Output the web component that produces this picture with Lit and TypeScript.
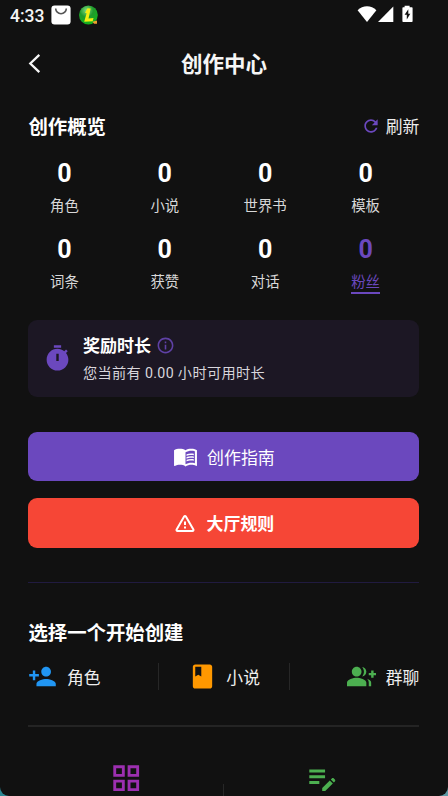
import { LitElement, html, css, svg } from "lit";
import { customElement, property } from "lit/decorators.js";
import { classMap } from "lit/directives/class-map.js";

const ICONS: Record<string, string> = {
  refresh:
    "M17.65 6.35C16.2 4.9 14.21 4 12 4c-4.42 0-7.99 3.58-7.99 8s3.57 8 7.99 8c3.73 0 6.84-2.55 7.73-6h-2.08c-.82 2.33-3.04 4-5.65 4-3.31 0-6-2.69-6-6s2.69-6 6-6c1.66 0 3.14.69 4.22 1.78L13 11h7V4l-2.35 2.35z",
  timer:
    "M9 1h6v2H9zM19.03 7.39l1.42-1.42c-.43-.51-.9-.99-1.41-1.41l-1.42 1.42C16.07 4.74 14.12 4 12 4c-4.97 0-9 4.03-9 9s4.02 9 9 9 9-4.03 9-9c0-2.12-.74-4.07-1.97-5.61zM13 14h-2V8h2v6z",
  info:
    "M11 7h2v2h-2zm0 4h2v6h-2zm1-9C6.48 2 2 6.48 2 12s4.48 10 10 10 10-4.48 10-10S17.52 2 12 2zm0 18c-4.41 0-8-3.59-8-8s3.59-8 8-8 8 3.59 8 8-3.59 8-8 8z",
  book:
    "M21 5c-1.11-.35-2.33-.5-3.5-.5-1.95 0-4.05.4-5.5 1.5-1.45-1.1-3.55-1.5-5.5-1.5S2.45 4.9 1 6v14.65c0 .25.25.5.5.5.1 0 .15-.05.25-.05C3.1 20.45 5.05 20 6.5 20c1.95 0 4.05.4 5.5 1.5 1.35-.85 3.8-1.5 5.5-1.5 1.65 0 3.35.3 4.75 1.05.1.05.15.05.25.05.25 0 .5-.25.5-.5V6c-.6-.45-1.25-.75-2-1zm0 13.5c-1.1-.35-2.3-.5-3.5-.5-1.7 0-4.15.65-5.5 1.5V8c1.35-.85 3.8-1.5 5.5-1.5 1.2 0 2.4.15 3.5.5v11.5zM17.5 10.5c.88 0 1.73.09 2.5.26V9.24c-.79-.15-1.64-.24-2.5-.24-1.7 0-3.24.29-4.5.83v1.66c1.13-.64 2.7-.99 4.5-.99zM13 12.49v1.66c1.13-.64 2.7-.99 4.5-.99.88 0 1.73.09 2.5.26V11.9c-.79-.15-1.64-.24-2.5-.24-1.7 0-3.24.3-4.5.83zm4.5 1.84c-1.7 0-3.24.29-4.5.83v1.66c1.13-.64 2.7-.99 4.5-.99.88 0 1.73.09 2.5.26v-1.52c-.79-.16-1.64-.24-2.5-.24z",
  warning:
    "M12 5.99L19.53 19H4.47L12 5.99M2.74 18c-.77 1.33.19 3 1.73 3h15.06c1.54 0 2.5-1.67 1.73-3L13.73 4.99c-.77-1.33-2.69-1.33-3.46 0L2.74 18zM11 10.5v3.5h2v-3.5zm0 5h2v2h-2z",
  person:
    "M15 12c2.21 0 4-1.79 4-4s-1.79-4-4-4-4 1.79-4 4 1.79 4 4 4zm-9-2V7H4v3H1v2h3v3h2v-3h3v-2H6zm9 4c-2.67 0-8 1.34-8 4v2h16v-2c0-2.66-5.33-4-8-4z",
  novel:
    "M18 2H6c-1.1 0-2 .9-2 2v16c0 1.1.9 2 2 2h12c1.1 0 2-.9 2-2V4c0-1.1-.9-2-2-2zM6 4h5v8l-2.5-1.5L6 12V4z",
  group:
    "M22 9V7h-2v2h-2v2h2v2h2v-2h2V9zM8 12c2.21 0 4-1.79 4-4s-1.79-4-4-4-4 1.79-4 4 1.79 4 4 4zm0 1c-2.67 0-8 1.34-8 4v3h16v-3c0-2.66-5.33-4-8-4zM12.51 4.05C13.43 5.11 14 6.49 14 8s-.57 2.89-1.49 3.95C14.47 11.7 16 10.04 16 8s-1.53-3.7-3.49-3.95zM16.53 13.83C17.42 14.66 18 15.7 18 17v3h2v-3c0-1.45-1.59-2.51-3.47-3.17z",
  grid:
    "M3 3v8h8V3H3zm6 6H5V5h4v4zm-6 4v8h8v-8H3zm6 6H5v-4h4v4zm4-16v8h8V3h-8zm6 6h-4V5h4v4zm-6 4v8h8v-8h-8zm6 6h-4v-4h4v4z",
  note:
    "M3 10h11v2H3v-2zm0-2h11V6H3v2zm0 8h7v-2H3v2zm15.01-3.13.71-.71c.39-.39 1.02-.39 1.41 0l.71.71c.39.39.39 1.02 0 1.41l-.71.71-2.12-2.12zm-.71.71-5.3 5.3V21h2.12l5.3-5.3-2.12-2.12z",
};

@customElement("md-icon")
class MdIcon extends LitElement {
  @property() name = "";
  static styles = css`
    :host {
      display: block;
      flex: none;
      width: 29px;
      height: 29px;
    }
    .glyph {
      display: block;
      width: 100%;
      height: 100%;
      fill: currentColor;
    }
  `;
  render() {
    return html`<svg class="glyph" viewBox="0 0 24 24">
      ${svg`<path fill-rule=${this.name === "warning" ? "evenodd" : "nonzero"} d=${ICONS[this.name]}></path>`}
    </svg>`;
  }
}

const STATS = [
  { label: "角色", value: 0 },
  { label: "小说", value: 0 },
  { label: "世界书", value: 0 },
  { label: "模板", value: 0 },
  { label: "词条", value: 0 },
  { label: "获赞", value: 0 },
  { label: "对话", value: 0 },
  { label: "粉丝", value: 0, link: true },
];

@customElement("app-root")
class AppRoot extends LitElement {
  static styles = css`
    :host {
      display: block;
      height: 796px;
      overflow: hidden;
      background: linear-gradient(90deg, #2b8793, #5f9aa5);
      font-family: Roboto, "Noto Sans CJK SC", sans-serif;
      color: #fff;
    }
    .screen {
      box-sizing: border-box;
      height: 796px;
      overflow: hidden;
      background: #111;
      border-radius: 0 0 9px 9px;
      display: flex;
      flex-direction: column;
    }
    .status {
      flex: none;
      height: 31px;
      box-sizing: border-box;
      padding: 0 34px 0 10px;
      display: flex;
      align-items: center;
    }
    .time {
      font-size: 17.5px;
      line-height: 31px;
      font-weight: 500;
      width: 41px;
      padding-top: 1px;
      color: #f4f4f4;
    }
    .bag {
      width: 20px;
      height: 20px;
      margin-bottom: 1px;
    }
    .ball {
      width: 20px;
      height: 20px;
      margin: 0 0 1px 7px;
    }
    .signals {
      margin-left: auto;
      width: 57px;
      height: 18px;
      margin-bottom: 3px;
      margin-right: 1px;
    }
    .header {
      flex: none;
      height: 66px;
      display: grid;
      grid-template-columns: 56px 1fr 56px;
      align-items: center;
    }
    .back {
      width: 14px;
      height: 21px;
      margin: -2px 0 0 27px;
    }
    .title {
      text-align: center;
      font-size: 21.5px;
      line-height: 30px;
      padding-top: 2px;
      font-weight: 700;
      color: #f6f6f6;
    }
    .body {
      width: 391px;
      margin-left: 28.4px;
      display: flex;
      flex-direction: column;
    }
    .row {
      display: flex;
      align-items: center;
    }
    .section {
      height: 30px;
      margin-top: 14px;
      justify-content: space-between;
    }
    .h2 {
      font-size: 19.4px;
      line-height: 30px;
      font-weight: 700;
    }
    .section .h2 {
      padding-top: 3px;
    }
    .refresh {
      gap: 5px;
      font-size: 16.8px;
      color: #eee;
    }
    .refresh md-icon {
      width: 20px;
      height: 20px;
      color: #6b48be;
    }
    .stats {
      display: grid;
      grid-template-columns: repeat(4, 72px);
      grid-auto-rows: 75.5px;
      column-gap: 28.4px;
      margin-top: 18px;
      height: 160.5px;
    }
    .stat {
      display: flex;
      flex-direction: column;
      align-items: center;
    }
    .num {
      font-size: 25px;
      line-height: 30px;
      font-weight: 700;
    }
    .lab {
      font-size: 14.4px;
      line-height: 19px;
      margin-top: 8px;
      padding-bottom: 0.5px;
      color: #d8d8d8;
      border-bottom: 2px solid transparent;
    }
    .link .num,
    .link .lab {
      color: #6b48be;
    }
    .link .lab {
      border-color: #6b48be;
    }
    .card {
      height: 77.5px;
      box-sizing: border-box;
      border-radius: 9px;
      background: #1c1724;
      padding-left: 15px;
      gap: 10.5px;
    }
    .card md-icon {
      color: #6b48be;
    }
    .words {
      padding-top: 4px;
    }
    .reward {
      gap: 5px;
      font-size: 17px;
      line-height: 26px;
      font-weight: 700;
    }
    .reward md-icon {
      width: 19px;
      height: 19px;
      margin-bottom: 2px;
      color: #5f41a6;
    }
    .hint {
      font-size: 14.2px;
      line-height: 28px;
      letter-spacing: 0.35px;
      color: #d8d6dc;
      white-space: pre;
    }
    .btn {
      height: 49.5px;
      border-radius: 9px;
      justify-content: center;
      gap: 9px;
      font-size: 16.9px;
      margin-top: 17px;
    }
    .btn md-icon {
      width: 25px;
      height: 25px;
    }
    .guide {
      margin-top: 34.5px;
      background: #6b48be;
    }
    .rules {
      background: #f64636;
      font-weight: 700;
    }
    .rules md-icon {
      width: 24px;
      height: 24px;
      margin-left: -1px;
      margin-right: 1px;
    }
    .hr {
      height: 1.5px;
      background: #242424;
    }
    .violet {
      margin-top: 34px;
      background: #211b40;
    }
    .pick {
      margin-top: 36px;
    }
    .types {
      display: grid;
      grid-template-columns: 1fr 1px 1fr 1px 1fr;
      align-items: center;
      height: 30px;
      margin-top: 12.5px;
      margin-bottom: 33.5px;
    }
    .type {
      gap: 9.5px;
      font-size: 16.8px;
      color: #eee;
    }
    .blue {
      color: #2196f3;
    }
    .orange {
      color: #ff9800;
    }
    .green {
      color: #4caf50;
    }
    .purple {
      color: #9c2fb0;
    }
    .bar {
      width: 1px;
      height: 27px;
      background: #272727;
    }
    .mid {
      justify-content: center;
    }
    .last {
      justify-content: flex-end;
    }
    .more {
      display: grid;
      grid-template-columns: 1fr 1px 1fr;
      justify-items: center;
      margin-top: 34px;
    }
    .more md-icon {
      width: 34.4px;
      height: 34.4px;
    }
    .sep {
      width: 1px;
      height: 30px;
      margin-top: 23px;
      background: #272727;
    }
  `;

  render() {
    return html`<div class="screen">
      <div class="status">
        <span class="time">4:33</span>
        <svg class="bag" viewBox="0 0 20 20">
          <rect x="0.4" y="0.4" width="19.2" height="19" rx="3.2" fill="#fff"></rect>
          <path d="M4.7 3.4a5.3 5.3 0 0 0 10.6 0" fill="none" stroke="#555" stroke-width="1.6"></path>
        </svg>
        <svg class="ball" viewBox="0 0 20 20">
          <defs>
            <radialGradient id="g" cx="0.4" cy="0.25" r="0.8">
              <stop offset="0" stop-color="#7fdc83"></stop>
              <stop offset="0.45" stop-color="#1f9a2c"></stop>
              <stop offset="1" stop-color="#12b51c"></stop>
            </radialGradient>
          </defs>
          <circle cx="10.4" cy="10" r="9.4" fill="url(#g)"></circle>
          <path d="M9.5 3.2l3.2.3-2.2 10 5-.6-.8 3.3-8.5.6 2.4-8.6-1.6-.5z" fill="#f2ee12"></path>
          <path d="M14.5 16.7l4.5-1.2v3.3h-3z" fill="#f0a02c"></path>
        </svg>
        <svg class="signals" viewBox="0 0 57 18">
          <path d="M1.6 5.3C6.6-.2 15.4-.2 20.4 5.3L11 17z" fill="#fff"></path>
          <path d="M37.3 1.5V17H22z" fill="#fff"></path>
          <path
            d="M48.6.8h5v1.5h2.2q.8 0 .8.8V16.2q0 .8-.8.8h-8.6q-.8 0-.8-.8V3.1q0-.8.8-.8h1.4z"
            fill="#fff"
          ></path>
          <path d="M52.3 4.2l-3.7 5.6h2.2v4.6l3.5-5.7h-2z" fill="#111"></path>
        </svg>
      </div>
      <div class="header">
        <svg class="back" viewBox="0 0 14 21">
          <path d="M12.3 1.8L3.3 10.5l9 8.7" fill="none" stroke="#f6f6f6" stroke-width="2.3"></path>
        </svg>
        <div class="title">创作中心</div>
      </div>
      <div class="body">
        <div class="row section">
          <div class="h2">创作概览</div>
          <div class="row refresh"><md-icon name="refresh"></md-icon><span>刷新</span></div>
        </div>
        <div class="stats">
          ${STATS.map(
            (s) => html`<div class=${classMap({ stat: true, link: !!s.link })}>
              <span class="num">${s.value}</span><span class="lab">${s.label}</span>
            </div>`
          )}
        </div>
        <div class="row card">
          <md-icon name="timer"></md-icon>
          <div class="words">
            <div class="row reward"><span>奖励时长</span><md-icon name="info"></md-icon></div>
            <div class="hint">您当前有 0.00 小时可用时长</div>
          </div>
        </div>
        <div class="row btn guide"><md-icon name="book"></md-icon><span>创作指南</span></div>
        <div class="row btn rules"><md-icon name="warning"></md-icon><span>大厅规则</span></div>
        <div class="hr violet"></div>
        <div class="h2 pick">选择一个开始创建</div>
        <div class="types">
          <div class="row type"><md-icon class="blue" name="person"></md-icon><span>角色</span></div>
          <div class="bar"></div>
          <div class="row type mid"><md-icon class="orange" name="novel"></md-icon><span>小说</span></div>
          <div class="bar"></div>
          <div class="row type last"><md-icon class="green" name="group"></md-icon><span>群聊</span></div>
        </div>
        <div class="hr"></div>
        <div class="more">
          <md-icon class="purple" name="grid"></md-icon>
          <div class="sep"></div>
          <md-icon class="green" name="note"></md-icon>
        </div>
      </div>
    </div>`;
  }
}
